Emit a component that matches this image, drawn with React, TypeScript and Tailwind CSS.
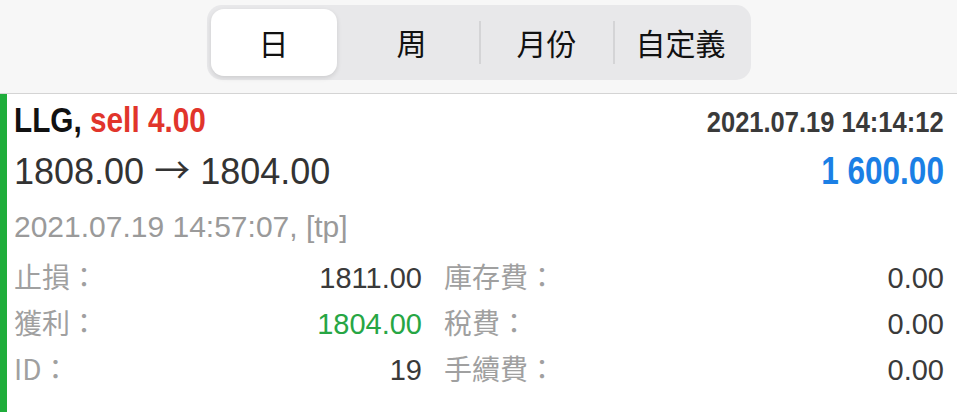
import React from "react";

const sans = "font-['Liberation_Sans','Noto_Sans_CJK_TC',sans-serif]";
const cjk = "font-['Noto_Sans_CJK_TC','Liberation_Sans',sans-serif]";

const tabs = ["日", "周", "月份", "自定義"];

const details = [
  { label: "止損：", value: "1811.00", color: "text-[#3a3a3a]", label2: "庫存費：", value2: "0.00" },
  { label: "獲利：", value: "1804.00", color: "text-[#27a644]", label2: "稅費：", value2: "0.00" },
  { label: "ID：", value: "19", color: "text-[#3a3a3a]", label2: "手續費：", value2: "0.00" },
];

function Segmented() {
  return (
    <div className="flex w-[544px] h-[75px] rounded-[15px] bg-[#e8e8ea] p-[4px]">
      {tabs.map((t, i) => (
        <div key={t} className="flex flex-1 items-center">
          {i > 1 && <div className="w-[2px] h-[43px] bg-[#d4d4d6]" />}
          <div
            className={`flex flex-1 h-full items-center justify-center rounded-[13px] text-[30px] text-[#111] ${cjk} ${
              i === 0 ? "mr-[8px] bg-white shadow-[0_2px_5px_rgba(0,0,0,0.12)]" : ""
            }`}
          >
            {t}
          </div>
        </div>
      ))}
    </div>
  );
}

export default function App() {
  return (
    <div className="w-[957px] h-[412px] bg-white overflow-hidden">
      <div className="flex justify-center h-[94px] pt-[5px] bg-[#f7f7f7] border-b border-[#d4d4d4]">
        <Segmented />
      </div>
      <div className="flex h-[318px]">
        <div className="w-[7px] bg-[#1fad3b]" />
        <div className="flex-1 pl-[7px] pr-[13px] pt-[6px]">
          <div className="flex justify-between items-baseline h-[46px] leading-[40px]">
            <div className={`${sans} inline-block origin-left scale-x-[0.85] font-bold text-[35px] text-[#111] whitespace-nowrap`}>
              LLG, <span className="text-[#e1352b]">sell 4.00</span>
            </div>
            <div className={`${sans} inline-block origin-right scale-x-[0.85] font-bold text-[30px] text-[#3a3a3a] whitespace-nowrap`}>
              2021.07.19 14:14:12
            </div>
          </div>
          <div className="flex justify-between items-baseline leading-[44px]">
            <div className={`${sans} text-[36px] text-[#333] whitespace-nowrap`}>
              1808.00 <span className={cjk}>→</span> 1804.00
            </div>
            <div className={`${sans} inline-block origin-right scale-x-[0.83] font-bold text-[38px] text-[#1b7fe5] whitespace-nowrap`}>
              1 600.00
            </div>
          </div>
          <div className={`${sans} mt-[13px] text-[30px] leading-[40px] text-[#9a9a9a]`}>
            2021.07.19 14:57:07, [tp]
          </div>
          <div className="mt-[6px] grid grid-cols-[408px_1fr] gap-x-[22px]">
            {details.map((d) => (
              <React.Fragment key={d.label}>
                <div className="flex justify-between items-baseline h-[46px] leading-[46px]">
                  <span className={`${cjk} text-[28px] text-[#a0a0a0]`}>{d.label}</span>
                  <span className={`${sans} text-[29px] ${d.color}`}>{d.value}</span>
                </div>
                <div className="flex justify-between items-baseline h-[46px] leading-[46px]">
                  <span className={`${cjk} text-[28px] text-[#a0a0a0]`}>{d.label2}</span>
                  <span className={`${sans} text-[29px] text-[#3a3a3a]`}>{d.value2}</span>
                </div>
              </React.Fragment>
            ))}
          </div>
        </div>
      </div>
    </div>
  );
}
